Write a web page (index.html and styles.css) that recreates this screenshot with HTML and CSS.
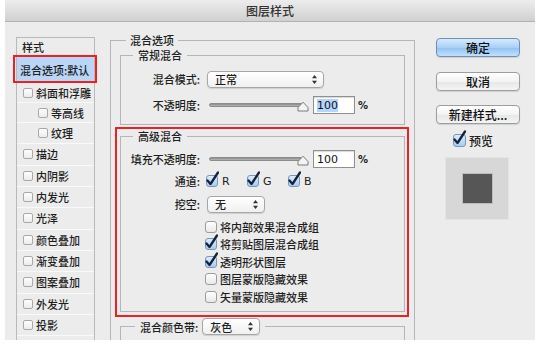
FILE: index.html
```html
<!doctype html>
<html lang="zh">
<head>
<meta charset="UTF-8" />
<title>图层样式</title>
<link rel="stylesheet" href="styles.css">
</head>
<body>
<div class="dialog">
  <div class="titlebar">图层样式</div>

  <div class="body">
    <!-- seznam stylů -->
    <ul class="styles">
      <li class="head">样式</li>
      <li class="sel">混合选项:默认</li>
      <li class="short"><span class="lbox"></span>斜面和浮雕</li>
      <li class="short sub"><span class="lbox"></span>等高线</li>
      <li class="sub"><span class="lbox"></span>纹理</li>
      <li><span class="lbox"></span>描边</li>
      <li><span class="lbox"></span>内阴影</li>
      <li><span class="lbox"></span>内发光</li>
      <li><span class="lbox"></span>光泽</li>
      <li><span class="lbox"></span>颜色叠加</li>
      <li><span class="lbox"></span>渐变叠加</li>
      <li><span class="lbox"></span>图案叠加</li>
      <li><span class="lbox"></span>外发光</li>
      <li><span class="lbox"></span>投影</li>
      <li></li>
    </ul>

    <fieldset class="group main">
      <legend>混合选项</legend>

      <fieldset class="group normal">
        <legend>常规混合</legend>
        <div class="row">
          <label>混合模式:</label>
          <div class="select mode">正常
            <svg width="5" height="9" viewBox="0 0 5 9"><path d="M2.5 0L5 3.2H0Z M2.5 9L5 5.8H0Z" fill="#333"/></svg>
          </div>
        </div>
        <div class="row">
          <label>不透明度:</label>
          <div class="slider">
            <div class="track"></div>
            <svg class="thumb" width="12" height="11" viewBox="0 0 12 11"><path d="M1 10V6.5L6 1.2L11 6.5V10Z" fill="#f4f4f4" stroke="#7a7a7a"/></svg>
          </div>
          <div class="num hl"><span>100</span></div>
          <span class="pct">%</span>
        </div>
      </fieldset>

      <!-- červený rámeček -->
      <div class="mark">
        <fieldset class="group adv">
          <legend>高级混合</legend>
          <div class="row">
            <label>填充不透明度:</label>
            <div class="slider">
              <div class="track"></div>
              <svg class="thumb" width="12" height="11" viewBox="0 0 12 11"><path d="M1 10V6.5L6 1.2L11 6.5V10Z" fill="#f4f4f4" stroke="#7a7a7a"/></svg>
            </div>
            <div class="num"><span>100</span></div>
            <span class="pct">%</span>
          </div>
          <div class="row chan">
            <label>通道:</label>
            <span class="ch"><span class="cb on"><svg width="14" height="16" viewBox="0 0 14 16"><path d="M2.5 9.5L5.5 13L13 1.5" fill="none" stroke="#18223a" stroke-width="2.3" stroke-linecap="round" stroke-linejoin="round"/></svg></span>R</span>
            <span class="ch"><span class="cb on"><svg width="14" height="16" viewBox="0 0 14 16"><path d="M2.5 9.5L5.5 13L13 1.5" fill="none" stroke="#18223a" stroke-width="2.3" stroke-linecap="round" stroke-linejoin="round"/></svg></span>G</span>
            <span class="ch"><span class="cb on"><svg width="14" height="16" viewBox="0 0 14 16"><path d="M2.5 9.5L5.5 13L13 1.5" fill="none" stroke="#18223a" stroke-width="2.3" stroke-linecap="round" stroke-linejoin="round"/></svg></span>B</span>
          </div>
          <div class="row knock">
            <label>挖空:</label>
            <div class="select small">无
              <svg width="5" height="9" viewBox="0 0 5 9"><path d="M2.5 0L5 3.2H0Z M2.5 9L5 5.8H0Z" fill="#333"/></svg>
            </div>
          </div>
          <div class="opts">
            <div class="opt"><span class="cb"></span>将内部效果混合成组</div>
            <div class="opt"><span class="cb on"><svg width="14" height="16" viewBox="0 0 14 16"><path d="M2.5 9.5L5.5 13L13 1.5" fill="none" stroke="#18223a" stroke-width="2.3" stroke-linecap="round" stroke-linejoin="round"/></svg></span>将剪贴图层混合成组</div>
            <div class="opt"><span class="cb on"><svg width="14" height="16" viewBox="0 0 14 16"><path d="M2.5 9.5L5.5 13L13 1.5" fill="none" stroke="#18223a" stroke-width="2.3" stroke-linecap="round" stroke-linejoin="round"/></svg></span>透明形状图层</div>
            <div class="opt"><span class="cb"></span>图层蒙版隐藏效果</div>
            <div class="opt"><span class="cb"></span>矢量蒙版隐藏效果</div>
          </div>
        </fieldset>
      </div>

      <fieldset class="group band">
        <legend>
          <span>混合颜色带:</span>
          <div class="select small">灰色
            <svg width="5" height="9" viewBox="0 0 5 9"><path d="M2.5 0L5 3.2H0Z M2.5 9L5 5.8H0Z" fill="#333"/></svg>
          </div>
        </legend>
      </fieldset>
    </fieldset>

    <div class="side">
      <div class="btn default">确定</div>
      <div class="btn">取消</div>
      <div class="btn">新建样式...</div>
      <div class="prev-check">
        <span class="cb on big"><svg width="14" height="16" viewBox="0 0 14 16"><path d="M2.5 9.5L5.5 13L13 1.5" fill="none" stroke="#18223a" stroke-width="2.3" stroke-linecap="round" stroke-linejoin="round"/></svg></span>预览
      </div>
      <div class="preview"><div class="swatch"></div></div>
    </div>
  </div>
</div>
</body>
</html>
```

FILE: styles.css
```css
body {
margin: 0;
background: #fff;
font-family: "Noto Sans CJK SC", "DejaVu Sans", sans-serif;
font-size: 11px;
font-weight: 500;
color: #1e1e1e;
}

.dialog {
margin-left: 5px;
width: 530px;
height: 340px;
background: #ececec;
overflow: hidden;
}

.titlebar {
height: 21px;
border-bottom: 1px solid #b2b2b2;
background: linear-gradient(#ededed, #d0d0d0);
text-align: center;
line-height: 21px;
font-size: 12px;
color: #333;
}

.body {
display: flex;
align-items: flex-start;
padding-top: 12px;
}

/* seznam vlevo */
.styles {
list-style: none;
margin: 3px 15px 0 11px;
padding: 0;
width: 79px;
box-sizing: border-box;
border: 1px solid #b9b9b9;
background: #ececec;
flex: none;
}

.styles li {
height: 21.33px;
box-sizing: border-box;
display: flex;
align-items: center;
padding-left: 6px;
border-bottom: 1px solid #f9f9f9;
white-space: nowrap;
}

.styles li.short {
height: 20px;
}

.styles li.sub {
padding-left: 21px;
}

.styles li.head {
height: 19px;
padding-left: 5px;
}

.styles li.sel {
height: 26px;
padding-left: 3px;
background: #b9d6f6;
position: relative;
}

.styles li.sel::after {
content: "";
position: absolute;
left: -4px;
right: -3px;
top: -2px;
bottom: -1px;
border: 2px solid #ec2222;
}

.lbox {
width: 10px;
height: 10px;
box-sizing: border-box;
border: 1px solid #a9a9a9;
border-radius: 2px;
background: linear-gradient(#fdfdfd, #ececec);
margin-right: 3px;
flex: none;
}

/* skupiny */
fieldset.group {
margin: 0;
padding: 0;
border: 1px solid #b5b5b5;
min-width: 0;
}

fieldset.group legend {
padding: 0 4px;
line-height: 14px;
}

.main {
width: 305px;
box-sizing: border-box;
height: 330px;
margin-top: -1px !important;
padding: 0 9px !important;
flex: none;
}

.main > legend {
margin-left: 6px;
}

.normal {
margin-top: 1px !important;
padding: 8px 0 10px !important;
}

.normal > legend,
.adv > legend {
margin-left: 12px;
padding: 0 5px !important;
}

.row {
display: flex;
align-items: center;
height: 18px;
}

.normal .row + .row {
margin-top: 8px;
}

.row label {
width: 79px;
text-align: right;
margin-right: 6px;
flex: none;
white-space: nowrap;
}

.select {
display: flex;
align-items: center;
justify-content: space-between;
height: 17px;
box-sizing: border-box;
margin-left: 1px;
padding: 0 6px 0 7px;
border: 1px solid #a6a6a6;
border-radius: 4px;
background: linear-gradient(#ffffff, #f0f0f0);
box-shadow: 0 1px 1px rgba(0, 0, 0, 0.12);
}

.select.mode {
width: 117px;
}

.select.small {
width: 58px;
}

.slider {
display: flex;
align-items: center;
width: 100px;
margin-left: 3px;
}

.track {
flex: 1;
height: 4px;
border-radius: 2px;
background: linear-gradient(#8a8a8a, #b9b9b9);
border: 1px solid #8c8c8c;
box-sizing: border-box;
}

.thumb {
margin-left: -6px;
margin-top: 3px;
}

.num {
width: 42px;
height: 18px;
box-sizing: border-box;
margin-left: 4px;
padding-left: 3px;
display: flex;
align-items: center;
border: 1px solid #8f8f8f;
background: #fff;
box-shadow: inset 0 1px 1px rgba(0, 0, 0, 0.15);
font-family: "DejaVu Sans", sans-serif;
font-size: 11px;
font-weight: normal;
color: #111;
}

.num.hl span {
background: #b4d5fd;
}

.pct {
margin-left: 3px;
font-family: "DejaVu Sans", sans-serif;
font-size: 10px;
font-weight: bold;
}

/* červený rámeček */
.mark {
margin: 2px -4px 0 -5px;
padding: 0 2px 3px 3px;
border: 2px solid #ec2222;
}

.adv {
padding: 7px 0 5px !important;
}

.adv .row + .row {
margin-top: 4px;
}

.adv .row.knock {
margin-top: 5px;
}

.chan .ch {
display: flex;
align-items: center;
width: 41px;
font-family: "DejaVu Sans", sans-serif;
font-size: 11px;
font-weight: normal;
}

.chan .cb {
margin-right: 4px;
}

.opts {
margin-top: 5px;
padding-left: 84px;
}

.opt {
height: 17.5px;
display: flex;
align-items: center;
white-space: nowrap;
}

.opt .cb {
margin-right: 3px;
}

.cb {
position: relative;
width: 12px;
height: 12px;
box-sizing: border-box;
border: 1px solid #9c9c9c;
border-radius: 3px;
background: linear-gradient(#ffffff, #e8e8e8);
flex: none;
}

.cb.on {
border-color: #7896bb;
background: linear-gradient(#dcecfc, #a7cdf2);
}

.cb svg {
position: absolute;
left: -2px;
top: -5px;
}

.band {
margin-top: 1px !important;
height: 40px;
}

.band > legend {
display: flex;
align-items: center;
margin-left: 14px;
padding: 0 5px !important;
height: 18px;
}

.band > legend .select {
margin-left: 4px;
}

/* pravý sloupec */
.side {
margin: 4px 0 0 21px;
width: 84px;
flex: none;
}

.btn {
display: flex;
align-items: center;
justify-content: center;
height: 19px;
box-sizing: border-box;
margin-bottom: 14.5px;
border: 1px solid #9d9d9d;
border-radius: 4px;
background: linear-gradient(#ffffff, #f3f3f3 50%, #e6e6e6 51%, #f4f4f4);
box-shadow: 0 1px 1px rgba(0, 0, 0, 0.12);
font-size: 12px;
color: #111;
}

.btn.default {
border-color: #6f8fb6;
background: linear-gradient(#d6eafd, #a9d0f5 50%, #8fc1f0 51%, #c1e1fc);
}

.prev-check {
display: flex;
align-items: center;
height: 14px;
margin-top: -5.5px;
padding-left: 17px;
font-size: 12px;
}

.prev-check .cb {
width: 13px;
height: 13px;
margin-right: 3px;
}

.preview {
margin: 10px 0 0 9px;
width: 64px;
height: 63px;
box-sizing: border-box;
border: 1px solid #e4e4e4;
background: #d7d7d7;
display: flex;
align-items: center;
justify-content: center;
}

.swatch {
width: 31px;
height: 31px;
box-sizing: border-box;
border: 1px solid #bdbdbd;
background: #565656;
}
```
